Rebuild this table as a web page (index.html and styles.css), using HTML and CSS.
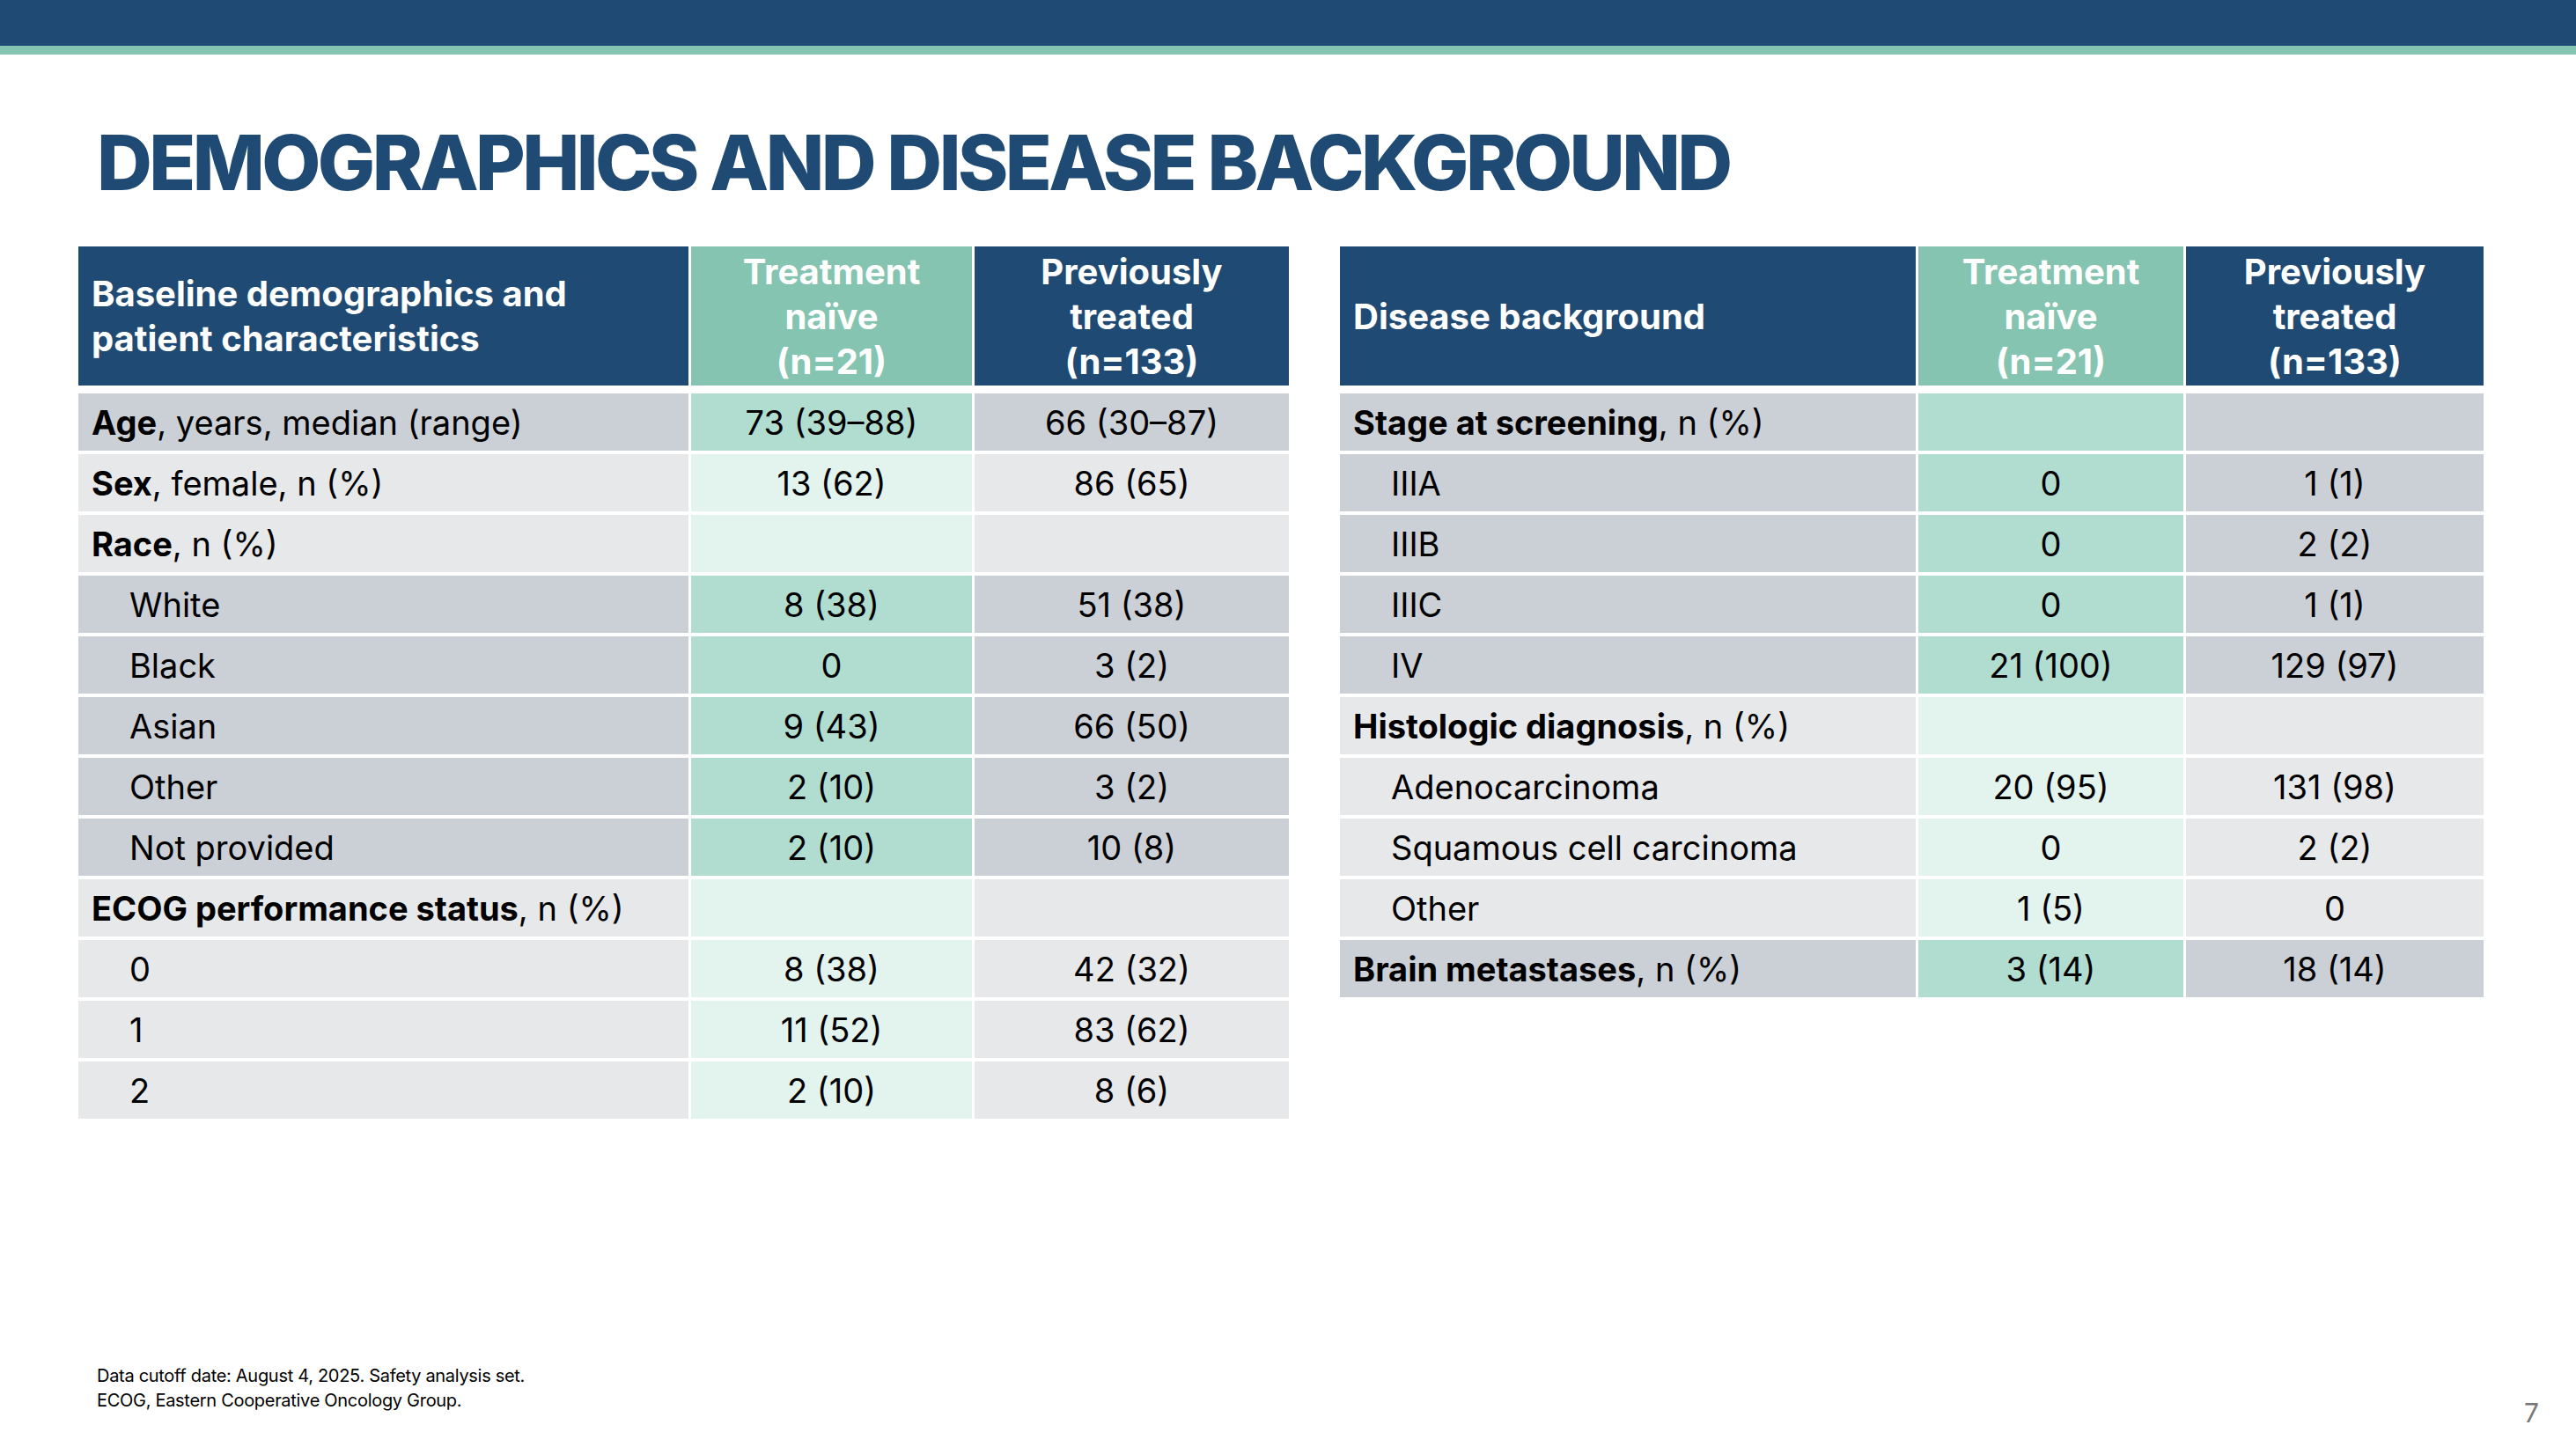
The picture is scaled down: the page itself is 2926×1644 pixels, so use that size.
FILE: index.html
```html
<!DOCTYPE html>
<html lang="en">
<head>
<meta charset="utf-8">
<title>Demographics and disease background</title>
<link rel="stylesheet" href="styles.css">
</head>
<body>
<div class="slide">
  <div class="topbar"></div>
  <div class="topstrip"></div>
  <h1 class="title">DEMOGRAPHICS AND DISEASE BACKGROUND</h1>
  <div class="tables">
    <div class="tbl tbl-left">
      <div class="hd hd-label">Baseline demographics and<br>patient characteristics</div>
      <div class="hd hd-naive">Treatment<br>naïve<br>(n=21)</div>
      <div class="hd hd-prev">Previously<br>treated<br>(n=133)</div>

      <div class="c lbl dk"><b>Age</b>, years, median (range)</div><div class="c val tdk">73 (39–88)</div><div class="c val dk">66 (30–87)</div>
      <div class="c lbl lt"><b>Sex</b>, female, n (%)</div><div class="c val tlt">13 (62)</div><div class="c val lt">86 (65)</div>
      <div class="c lbl lt"><b>Race</b>, n (%)</div><div class="c val tlt"></div><div class="c val lt"></div>
      <div class="c lbl dk ind">White</div><div class="c val tdk">8 (38)</div><div class="c val dk">51 (38)</div>
      <div class="c lbl dk ind">Black</div><div class="c val tdk">0</div><div class="c val dk">3 (2)</div>
      <div class="c lbl dk ind">Asian</div><div class="c val tdk">9 (43)</div><div class="c val dk">66 (50)</div>
      <div class="c lbl dk ind">Other</div><div class="c val tdk">2 (10)</div><div class="c val dk">3 (2)</div>
      <div class="c lbl dk ind">Not provided</div><div class="c val tdk">2 (10)</div><div class="c val dk">10 (8)</div>
      <div class="c lbl lt"><b>ECOG performance status</b>, n (%)</div><div class="c val tlt"></div><div class="c val lt"></div>
      <div class="c lbl lt ind">0</div><div class="c val tlt">8 (38)</div><div class="c val lt">42 (32)</div>
      <div class="c lbl lt ind">1</div><div class="c val tlt">11 (52)</div><div class="c val lt">83 (62)</div>
      <div class="c lbl lt ind">2</div><div class="c val tlt">2 (10)</div><div class="c val lt">8 (6)</div>
    </div>

    <div class="tbl tbl-right">
      <div class="hd hd-label">Disease background</div>
      <div class="hd hd-naive">Treatment<br>naïve<br>(n=21)</div>
      <div class="hd hd-prev">Previously<br>treated<br>(n=133)</div>

      <div class="c lbl dk"><b>Stage at screening</b>, n (%)</div><div class="c val tdk"></div><div class="c val dk"></div>
      <div class="c lbl dk ind">IIIA</div><div class="c val tdk">0</div><div class="c val dk">1 (1)</div>
      <div class="c lbl dk ind">IIIB</div><div class="c val tdk">0</div><div class="c val dk">2 (2)</div>
      <div class="c lbl dk ind">IIIC</div><div class="c val tdk">0</div><div class="c val dk">1 (1)</div>
      <div class="c lbl dk ind">IV</div><div class="c val tdk">21 (100)</div><div class="c val dk">129 (97)</div>
      <div class="c lbl lt"><b>Histologic diagnosis</b>, n (%)</div><div class="c val tlt"></div><div class="c val lt"></div>
      <div class="c lbl lt ind">Adenocarcinoma</div><div class="c val tlt">20 (95)</div><div class="c val lt">131 (98)</div>
      <div class="c lbl lt ind">Squamous cell carcinoma</div><div class="c val tlt">0</div><div class="c val lt">2 (2)</div>
      <div class="c lbl lt ind">Other</div><div class="c val tlt">1 (5)</div><div class="c val lt">0</div>
      <div class="c lbl dk"><b>Brain metastases</b>, n (%)</div><div class="c val tdk">3 (14)</div><div class="c val dk">18 (14)</div>
    </div>
  </div>

  <div class="footer">
    <div class="notes">
      <p>Data cutoff date: August 4, 2025. Safety analysis set.</p>
      <p>ECOG, Eastern Cooperative Oncology Group.</p>
    </div>
    <div class="pagenum">7</div>
  </div>
</div>
</body>
</html>
```

FILE: styles.css
```css
* { box-sizing: border-box; }
html, body { margin: 0; padding: 0; background: #ffffff; }
body { font-family: "Inter", "Liberation Sans", sans-serif; color: #000; }

.slide {
  width: 2926px;
  height: 1644px;
  display: flex;
  flex-direction: column;
  overflow: hidden;
}

.topbar { height: 52px; background: #1F4A73; flex: none; }
.topstrip { height: 10px; background: #84C6B2; flex: none; }

.title {
  margin: 73px 0 0 110px;
  font-family: "Inter", "Liberation Sans", sans-serif;
  font-weight: 800;
  font-size: 87px;
  line-height: 100px;
  letter-spacing: -3.6px;
  color: #1F4A73;
  flex: none;
}

.tables {
  display: flex;
  align-items: flex-start;
  gap: 58px;
  margin: 45px 0 0 89px;
  flex: none;
}

.tbl {
  display: grid;
  column-gap: 3px;
  row-gap: 4px;
  grid-auto-rows: 65px;
  grid-template-rows: 163px;
}
.tbl-left { grid-template-columns: 693px 319px 357px; }
.tbl-right { grid-template-columns: 654px 301px 338px; }

.hd {
  height: 158px;
  align-self: start;
  color: #ffffff;
  font-weight: 700;
  font-size: 40px;
  line-height: 51px;
  display: flex;
  align-items: center;
}
.hd-label { background: #1F4A73; padding-left: 15px; justify-content: flex-start; }
.hd-naive { background: #85C4B0; justify-content: center; text-align: center; }
.hd-prev { background: #1F4A73; justify-content: center; text-align: center; }

.c {
  display: flex;
  align-items: center;
  font-size: 38px;
  line-height: 1;
  white-space: nowrap;
}
.c b { font-weight: 700; }
.lbl { padding-left: 15px; }
.lbl.ind { padding-left: 58px; }
.val { justify-content: center; }

.dk { background: #CBD0D6; }
.lt { background: #E7E8EA; }
.tdk { background: #B1DDD1; }
.tlt { background: #E3F3EE; }

.footer {
  margin-top: auto;
  display: flex;
  justify-content: space-between;
  align-items: flex-end;
  padding: 0 42px 24px 110px;
}
.notes p {
  margin: 0;
  font-size: 20px;
  line-height: 28px;
  letter-spacing: -0.3px;
  color: #000;
}
.notes { margin-bottom: 15px; }
.pagenum {
  font-size: 30px;
  color: #777777;
  line-height: 1;
}
```
